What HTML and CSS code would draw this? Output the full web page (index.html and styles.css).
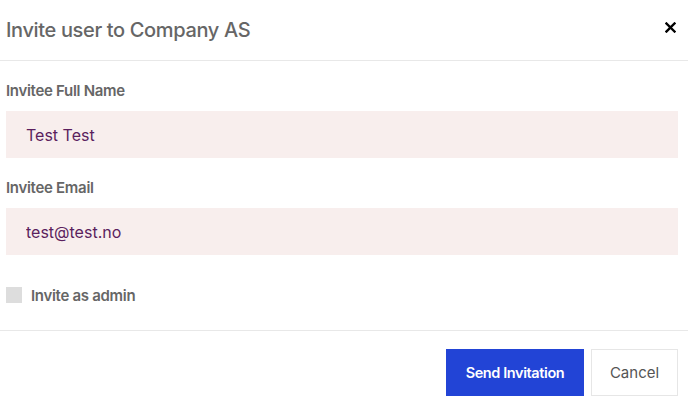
FILE: index.html
```html
<!DOCTYPE html>
<html lang="en">
<head>
  <meta charset="UTF-8">
  <title>Invite user</title>
  <link rel="stylesheet" href="styles.css">
</head>
<body>
  <div class="modal">
    <div class="modal-header">
      <h2>Invite user to Company AS</h2>
      <button class="close-button" aria-label="Close">
        <svg width="11" height="11" viewBox="0 0 11 11">
          <path d="M1.5 1.5 L9.5 9.5 M9.5 1.5 L1.5 9.5" stroke="#000" stroke-width="2.4" stroke-linecap="square"/>
        </svg>
      </button>
    </div>

    <div class="modal-body">
      <label class="field-label" for="fullName">Invitee Full Name</label>
      <input class="field-input" id="fullName" type="text" value="Test Test">

      <label class="field-label" for="email">Invitee Email</label>
      <input class="field-input" id="email" type="text" value="test@test.no">

      <label class="checkbox-row">
        <span class="checkbox"></span>
        Invite as admin
      </label>
    </div>

    <div class="modal-footer">
      <button class="send-button">Send Invitation</button>
      <button class="cancel-button">Cancel</button>
    </div>
  </div>
</body>
</html>
```

FILE: styles.css
```css
body {
  font-family: Inter, 'Noto Sans', sans-serif;
  background: #fff;
  margin: 0;
  color: #666;
}

.modal {
  width: 688px;
}

.modal-header {
  height: 60px;
  display: flex;
  align-items: center;
  justify-content: space-between;
  padding: 0 12px 0 6px;
  border-bottom: 1px solid #e8e8e8;
}

.modal-header h2 {
  margin: 0;
  font-size: 20px;
  font-weight: 500;
  color: #666;
  letter-spacing: -0.35px;
}

.close-button {
  border: none;
  background: none;
  padding: 0;
  cursor: pointer;
  display: flex;
  margin-top: -6px;
}

.modal-body {
  padding: 20px 10px 0 6px;
  display: flex;
  flex-direction: column;
}

.field-label {
  font-size: 15px;
  font-weight: 600;
  line-height: 20px;
  color: #666;
  margin-bottom: 10px;
  letter-spacing: -0.3px;
}

.field-input {
  height: 47px;
  box-sizing: border-box;
  border: none;
  background: #f8eeed;
  padding: 0 20px;
  font-family: inherit;
  font-size: 16px;
  color: #5b1f5e;
  margin-bottom: 20px;
  outline: none;
}

.checkbox-row {
  display: flex;
  align-items: center;
  gap: 9px;
  margin-top: 12px;
  font-size: 15px;
  font-weight: 600;
  color: #666;
  letter-spacing: -0.3px;
  height: 16px;
  padding-bottom: 27px;
}

.checkbox {
  width: 16px;
  height: 16px;
  background: #ddd;
}

.modal-footer {
  border-top: 1px solid #e8e8e8;
  display: flex;
  justify-content: flex-end;
  gap: 7px;
  padding: 18px 10px 0 0;
}

.send-button {
  width: 138px;
  height: 47px;
  border: none;
  background: #2244d6;
  color: #fff;
  font-family: inherit;
  font-size: 14.5px;
  font-weight: 600;
  letter-spacing: -0.4px;
  cursor: pointer;
}

.cancel-button {
  width: 87px;
  height: 47px;
  border: 1px solid #e6e6e6;
  background: #fff;
  color: #555;
  font-family: inherit;
  font-size: 15px;
  cursor: pointer;
}
```
